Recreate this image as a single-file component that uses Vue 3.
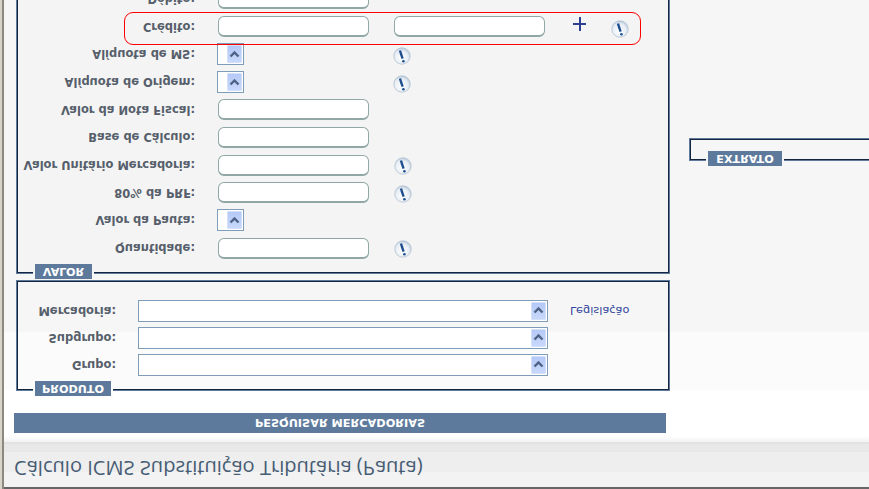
<template>
  <div class="page">
    <div class="title-bar">
      <h1>Cálculo ICMS Substituição Tributária (Pauta)</h1>
    </div>

    <div class="main">
      <div class="left">
        <button class="search">PESQUISAR MERCADORIAS</button>

        <fieldset class="box produto">
          <legend><span>PRODUTO</span></legend>
          <div v-for="item in produto" :key="item" class="prod-row">
            <label>{{ item }}:</label>
            <div class="combo wide">
              <span class="arrow">
                <svg width="11" height="7" viewBox="0 0 11 7"><path d="M1.5 1.5l4 4 4-4" fill="none" stroke="#4d6285" stroke-width="2.4" /></svg>
              </span>
            </div>
            <a v-if="item === 'Mercadoria'" class="link">Legislação</a>
          </div>
        </fieldset>

        <fieldset class="box valor">
          <legend><span>VALOR</span></legend>
          <div v-for="row in valor" :key="row.label" class="val-row" :class="{ credito: row.two }">
            <label>{{ row.label }}:</label>
            <div v-if="row.combo" class="combo small">
              <span class="arrow">
                <svg width="11" height="7" viewBox="0 0 11 7"><path d="M1.5 1.5l4 4 4-4" fill="none" stroke="#4d6285" stroke-width="2.4" /></svg>
              </span>
            </div>
            <input v-else type="text" />
            <input v-if="row.two" type="text" />
            <template v-if="row.two">
              <span class="plus"></span>
            </template>
            <svg v-if="row.info" class="info" width="18" height="18" viewBox="0 0 18 18">
              <circle cx="9" cy="9" r="8.2" fill="url(#ball)" stroke="#b4c2d0" stroke-width="0.8" />
              <path d="M7 14.5l1-3.5 1.6-4.6" stroke="#1d4f8f" stroke-width="2.4" fill="none" />
              <circle cx="10.4" cy="3.8" r="1.3" fill="#1d4f8f" />
            </svg>
          </div>
          <div class="red-box"></div>
        </fieldset>
      </div>

      <div class="right">
        <fieldset class="box extrato">
          <legend><span>EXTRATO</span></legend>
        </fieldset>
      </div>
    </div>

    <svg width="0" height="0" class="defs">
      <defs>
        <radialGradient id="ball" cx="0.45" cy="0.4" r="0.7">
          <stop offset="0" stop-color="#ffffff" />
          <stop offset="0.6" stop-color="#e6edf4" />
          <stop offset="1" stop-color="#9db4cc" />
        </radialGradient>
      </defs>
    </svg>
  </div>
</template>

<script setup>
const produto = ["Grupo", "Subgrupo", "Mercadoria"];

const valor = [
  { label: "Quantidade", info: true },
  { label: "Valor da Pauta", combo: true },
  { label: "80% da PRF", info: true },
  { label: "Valor Unitário Mercadoria", info: true },
  { label: "Base de Cálculo" },
  { label: "Valor da Nota Fiscal" },
  { label: "Alíquota de Origem", combo: true, info: true },
  { label: "Alíquota de MS", combo: true, info: true },
  { label: "Crédito", two: true, info: true },
  { label: "Débito" },
];
</script>

<style>
html,
body {
  margin: 0;
  overflow: hidden;
  background: #fff;
}
</style>

<style scoped>
.page {
  position: relative;
  width: 869px;
  height: 489px;
  overflow: hidden;
  box-sizing: border-box;
  padding-left: 4px;
  background: linear-gradient(90deg, #d8d4c8 2px, #8c8a7e 2px, #8c8a7e 4px, #fff 4px);
  transform: scaleY(-1);
  font-family: "DejaVu Sans", sans-serif;
  font-size: 11.5px;
  color: #565f6b;
}
.title-bar {
  height: 45px;
  box-sizing: border-box;
  border-top: 2px solid #666;
  background: linear-gradient(#f3f3f3 15px, #eeeeee 15px, #eeeeee 35px, #e8e8e8 35px);
  padding: 5px 0 0 10px;
}
h1 {
  margin: 0;
  font-family: "Open Sans", sans-serif;
  font-weight: 500;
  font-size: 20.1px;
  line-height: 28px;
  color: #465c74;
  white-space: nowrap;
}
.main {
  display: flex;
  height: 444px;
  background: linear-gradient(#e2e2e2 2px, #f2f2f2 2px, #ffffff 8px, #ffffff 54px, #fbfbfb 54px, #fbfbfb 112px, #f6f6f6 112px);
}
.left {
  width: 655px;
  padding: 11px 0 0 10px;
  box-sizing: content-box;
}
.search {
  display: block;
  width: 652px;
  height: 20px;
  padding: 0;
  border: 0;
  background: #5d7a9c;
  color: #fff;
  font: bold 11.3px "DejaVu Sans", sans-serif;
}
.box {
  margin: 17px 0 0 2px;
  padding: 1px;
  width: 650px;
  border: 1px solid #5d7a9c;
  box-shadow: inset 0 0 0 1px #14253d;
  min-width: 0;
}
.box legend {
  margin-left: 15px;
  padding: 0 2px;
  height: 11px;
  background: #f6f6f6;
}
.box legend span {
  display: block;
  height: 15px;
  line-height: 15px;
  background: #5d7a9c;
  color: #fff;
  font-weight: bold;
  font-size: 11.2px;
  text-align: center;
}
.produto legend span {
  width: 76px;
}
.valor legend span {
  width: 57px;
}
.extrato legend span {
  width: 74px;
}
.produto {
  height: 104px;
  padding-top: 9px;
  box-sizing: content-box;
}
.produto legend {
  background: #fcfcfc;
}
.prod-row {
  display: flex;
  align-items: center;
  height: 22px;
  margin-bottom: 5px;
}
.prod-row label {
  width: 98px;
  margin-right: 22px;
  text-align: right;
  font-weight: bold;
}
.combo {
  display: flex;
  justify-content: flex-end;
  align-items: center;
  height: 22px;
  box-sizing: border-box;
  border: 1px solid #7f9db9;
  background: #fff;
  padding-right: 1px;
}
.wide {
  width: 410px;
}
.small {
  width: 27px;
  margin-left: -1px;
  margin-right: 1px;
}
.arrow {
  display: flex;
  align-items: center;
  justify-content: center;
  width: 15px;
  height: 18px;
  background: linear-gradient(#c8d8fb, #b4c9f6);
  border: 1px solid #d4e0fb;
  box-sizing: border-box;
  border-radius: 1px;
}
.link {
  margin-left: 22px;
  color: #34479c;
  font-size: 11.3px;
  font-family: "DejaVu Sans", sans-serif;
}
.valor {
  position: relative;
  margin-top: 1px;
  padding-top: 6px;
  background: #f4f4f4;
  height: 300px;
}
.val-row {
  display: flex;
  align-items: center;
  height: 27.7px;
}
.val-row label {
  width: 177px;
  margin-right: 23px;
  text-align: right;
  font-weight: bold;
}
.val-row input {
  width: 151px;
  height: 21px;
  margin: 0 25px 0 0;
  padding: 0;
  box-sizing: border-box;
  border: 1px solid #8fa7a5;
  border-top-width: 2px;
  border-radius: 6px;
  background: #fff;
}
.info {
  margin-bottom: 2px;
}
.val-row .combo + .info {
  margin-left: 148px;
  margin-bottom: 4px;
}
.val-row.credito .info {
  margin-bottom: 4px;
}
.plus {
  width: 41px;
  height: 14px;
  margin-top: 5px;
  background:
    linear-gradient(#2d3f8f, #2d3f8f) 3px 6px / 13px 2px no-repeat,
    linear-gradient(#2d3f8f, #2d3f8f) 8.5px 0 / 2px 14px no-repeat;
}
.red-box {
  position: absolute;
  left: 107px;
  top: 223px;
  width: 515px;
  height: 31px;
  border: 1px solid #f00;
  border-radius: 9px;
}
.right {
  flex: 1;
}
.extrato {
  width: 300px;
  margin: 278px 0 0 20px;
  height: 24px;
}
.defs {
  position: absolute;
}
</style>
